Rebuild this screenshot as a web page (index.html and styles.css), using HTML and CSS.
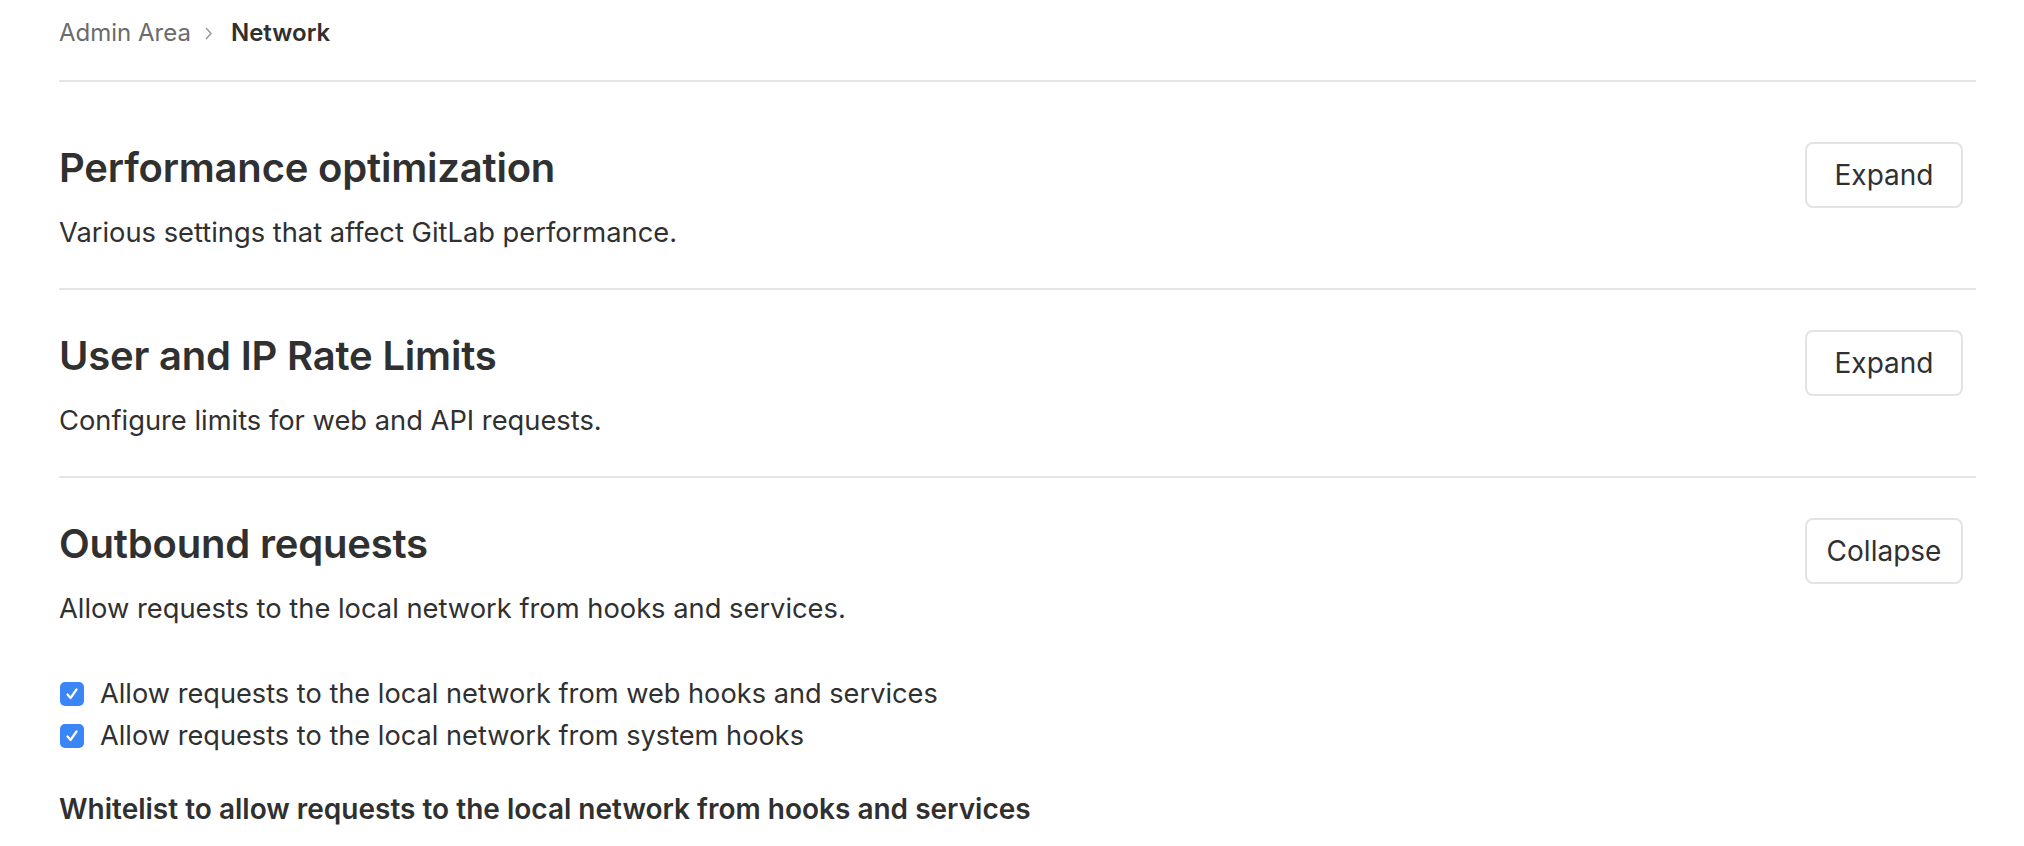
FILE: index.html
```html
<!DOCTYPE html>
<html lang="en">
<head>
<meta charset="utf-8">
<title>Network · Admin Area</title>
<link rel="stylesheet" href="styles.css">
</head>
<body>
<div class="page">
  <nav class="breadcrumbs">
    <span class="crumb">Admin Area</span>
    <svg class="chev" width="8" height="13" viewBox="0 0 8 13"><path d="M1.5 1.5 L6 6.5 L1.5 11.5" fill="none" stroke="#9a9a9a" stroke-width="1.6" stroke-linecap="round" stroke-linejoin="round"/></svg>
    <span class="crumb current">Network</span>
  </nav>

  <section class="settings first">
    <div class="settings-header">
      <div class="settings-text">
        <h2>Performance optimization</h2>
        <p>Various settings that affect GitLab performance.</p>
      </div>
      <button class="btn">Expand</button>
    </div>
  </section>

  <section class="settings">
    <div class="settings-header">
      <div class="settings-text">
        <h2>User and IP Rate Limits</h2>
        <p>Configure limits for web and API requests.</p>
      </div>
      <button class="btn">Expand</button>
    </div>
  </section>

  <section class="settings open">
    <div class="settings-header">
      <div class="settings-text">
        <h2>Outbound requests</h2>
        <p>Allow requests to the local network from hooks and services.</p>
      </div>
      <button class="btn">Collapse</button>
    </div>
    <div class="settings-content">
      <label class="check">
        <span class="box"><svg width="24" height="24" viewBox="0 0 24 24"><path d="M7.5 12.5 L10.5 16 L16.5 7.5" fill="none" stroke="#fff" stroke-width="2.2" stroke-linecap="round" stroke-linejoin="round"/></svg></span>
        <span>Allow requests to the local network from web hooks and services</span>
      </label>
      <label class="check">
        <span class="box"><svg width="24" height="24" viewBox="0 0 24 24"><path d="M7.5 12.5 L10.5 16 L16.5 7.5" fill="none" stroke="#fff" stroke-width="2.2" stroke-linecap="round" stroke-linejoin="round"/></svg></span>
        <span>Allow requests to the local network from system hooks</span>
      </label>
      <div class="field-label">Whitelist to allow requests to the local network from hooks and services</div>
    </div>
  </section>
</div>
</body>
</html>
```

FILE: styles.css
```css
* { box-sizing: border-box; }
html, body { margin: 0; padding: 0; background: #fff; }
body {
  font-family: Inter, "Noto Sans", "Liberation Sans", sans-serif;
  color: #303030;
  overflow: hidden;
}
.page {
  padding: 0 48px 0 59px;
}
.breadcrumbs {
  display: flex;
  align-items: flex-start;
  padding-top: 17px;
  height: 80px;
  font-size: 24px;
  line-height: 32px;
}
.crumb { color: #6b6b6b; }
.chev { margin: 10px 18px 0 14px; }
.crumb.current { color: #303030; font-weight: 600; }

.settings {
  border-top: 2px solid #e5e5e5;
  padding: 40px 13px 35px 0;
}
.settings.first { padding-top: 60px; }
.settings-header {
  display: flex;
  justify-content: space-between;
  align-items: flex-start;
}
.settings-text h2 {
  margin: 2px 0 0;
  font-size: 40px;
  line-height: 48px;
  font-weight: 600;
  letter-spacing: -0.2px;
}
.settings-text p {
  margin: 21px 0 0;
  font-size: 27.3px;
  line-height: 40px;
}
.btn {
  width: 158px;
  height: 66px;
  border: 2px solid #e3e3e3;
  border-radius: 8px;
  background: #fff;
  color: #303030;
  font-family: inherit;
  font-size: 28px;
  padding: 0;
}
.settings-content {
  padding-top: 44px;
}
.check {
  display: flex;
  align-items: center;
  font-size: 27.2px;
  line-height: 42px;
}
.box {
  width: 24px;
  height: 24px;
  border-radius: 5px;
  background: #3b86f6;
  margin: 0 16px 0 1px;
  display: flex;
}
.field-label {
  margin-top: 32px;
  font-size: 28px;
  line-height: 40px;
  font-weight: 600;
}
```
